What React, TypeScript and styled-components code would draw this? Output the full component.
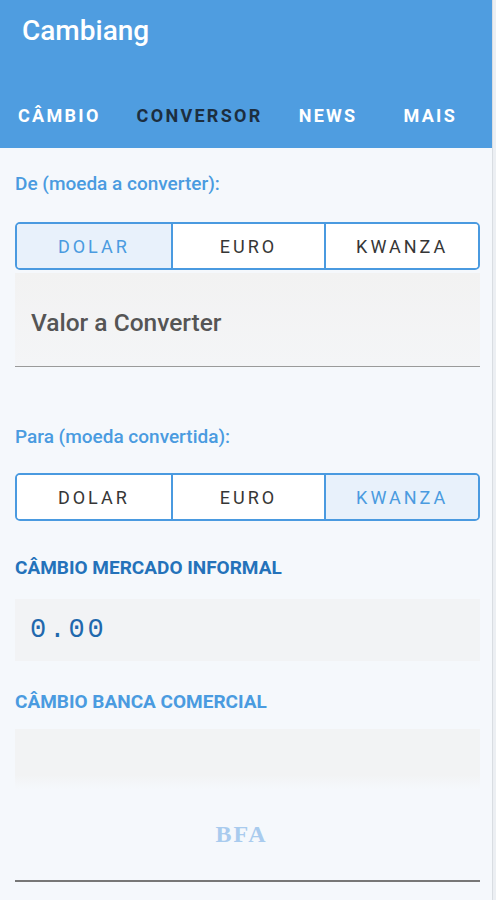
import React, { useState } from 'react';
import styled, { createGlobalStyle } from 'styled-components';

const GlobalStyle = createGlobalStyle`
  html, body {
    margin: 0;
    padding: 0;
    background: #eceff3;
  }
  * {
    box-sizing: border-box;
  }
`;

const Screen = styled.div`
  width: 493px;
  min-height: 900px;
  background: #f5f8fc;
  border-right: 1px solid #d9dde2;
  font-family: Roboto, 'Noto Sans', 'Liberation Sans', sans-serif;
  display: flex;
  flex-direction: column;
`;

const Header = styled.header`
  height: 148px;
  background: #4f9de0;
  display: flex;
  flex-direction: column;
  justify-content: space-between;
`;

const Title = styled.h1`
  margin: 0;
  padding: 13px 0 0 22px;
  color: #ffffff;
  font-size: 28px;
  font-weight: 500;
  line-height: 36px;
`;

const Tabs = styled.nav`
  display: flex;
  height: 62px;
  align-items: center;
  padding-bottom: 4px;
`;

const Tab = styled.div<{ active?: boolean }>`
  padding: 0 18px;
  font-size: 18px;
  font-weight: 700;
  letter-spacing: 2.3px;
  color: ${({ active }) => (active ? '#17222e' : '#ffffff')};
  opacity: ${({ active }) => (active ? 0.9 : 1)};
  &:last-child {
    padding-left: 28px;
  }
`;

const Content = styled.main`
  padding: 24px 12px 0 15px;
  display: flex;
  flex-direction: column;
`;

const Label = styled.div<{ tone?: 'light' | 'dark'; caps?: boolean }>`
  color: ${({ tone }) => (tone === 'dark' ? '#2472ba' : '#4a9be0')};
  font-size: 19px;
  font-weight: ${({ caps }) => (caps ? 700 : 500)};
  line-height: 24px;
`;

const Segmented = styled.div`
  display: grid;
  grid-template-columns: repeat(3, 1fr);
  height: 48px;
  border: 2px solid #4a9ae0;
  border-radius: 5px;
  overflow: hidden;
`;

const Segment = styled.button<{ selected?: boolean }>`
  border: none;
  border-left: 2px solid #4a9ae0;
  background: ${({ selected }) => (selected ? '#e8f1fb' : '#ffffff')};
  color: ${({ selected }) => (selected ? '#4a9be0' : '#363636')};
  font-family: Roboto, 'Noto Sans', 'Liberation Sans', sans-serif;
  font-size: 18px;
  font-weight: 400;
  letter-spacing: 3px;
  padding: 0;
  &:first-child {
    border-left: none;
  }
`;

const Field = styled.div`
  height: 94px;
  background: linear-gradient(#f2f2f2, #f4f5f7);
  border-bottom: 1px solid #9a9a9a;
  display: flex;
  align-items: center;
  padding-left: 16px;
  padding-top: 6px;
  color: #555555;
  font-size: 24.5px;
  font-weight: 500;
`;

const Result = styled.div`
  height: 62px;
  background: #f2f3f5;
  display: flex;
  align-items: center;
  padding-left: 15px;
  color: #2168ad;
  font-family: 'Liberation Mono', 'DejaVu Sans Mono', monospace;
  font-size: 27px;
  letter-spacing: 3px;
`;

const BankBox = styled.div`
  height: 153px;
  background: linear-gradient(#f2f3f4 0, #f2f3f4 46px, #f5f8fc 60px, #f5f8fc 100%);
  border-bottom: 2px solid #777777;
  display: flex;
  justify-content: center;
  align-items: flex-end;
  padding-bottom: 32px;
`;

const BankName = styled.span`
  font-family: 'Liberation Serif', 'DejaVu Serif', serif;
  font-weight: 700;
  font-size: 24px;
  letter-spacing: 2px;
  color: #a9cbee;
  padding-right: 12px;
`;

const Gap = styled.div<{ h: number }>`
  height: ${({ h }) => h}px;
  flex-shrink: 0;
`;

const currencies = ['DOLAR', 'EURO', 'KWANZA'];

const Picker = ({ value, onChange }: { value: string; onChange: (v: string) => void }) => (
  <Segmented>
    {currencies.map((c) => (
      <Segment key={c} selected={c === value} onClick={() => onChange(c)}>
        {c}
      </Segment>
    ))}
  </Segmented>
);

const App: React.FC = () => {
  const [from, setFrom] = useState('DOLAR');
  const [to, setTo] = useState('KWANZA');

  return (
    <>
      <GlobalStyle />
      <Screen>
        <Header>
          <Title>Cambiang</Title>
          <Tabs>
            <Tab>CÂMBIO</Tab>
            <Tab active>CONVERSOR</Tab>
            <Tab>NEWS</Tab>
            <Tab>MAIS</Tab>
          </Tabs>
        </Header>
        <Content>
          <Label>De (moeda a converter):</Label>
          <Gap h={26} />
          <Picker value={from} onChange={setFrom} />
          <Gap h={3} />
          <Field>Valor a Converter</Field>
          <Gap h={58} />
          <Label>Para (moeda convertida):</Label>
          <Gap h={24} />
          <Picker value={to} onChange={setTo} />
          <Gap h={35} />
          <Label tone="dark" caps>
            CÂMBIO MERCADO INFORMAL
          </Label>
          <Gap h={19} />
          <Result>0.00</Result>
          <Gap h={29} />
          <Label caps>CÂMBIO BANCA COMERCIAL</Label>
          <Gap h={15} />
          <BankBox>
            <BankName>BFA</BankName>
          </BankBox>
        </Content>
      </Screen>
    </>
  );
};

export default App;
